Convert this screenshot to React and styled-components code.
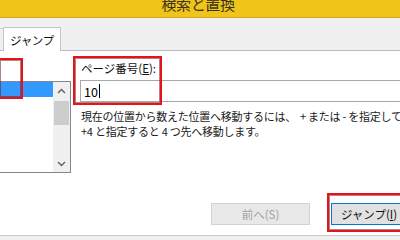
import React from "react";
import styled, { createGlobalStyle } from "styled-components";

const Global = createGlobalStyle`
  html, body { margin: 0; padding: 0; }
  body {
    width: 400px; height: 240px; overflow: hidden;
    background: #f0f0f0;
    font-family: "Noto Sans CJK JP", "Noto Sans", sans-serif;
    color: #1a1a1a;
  }
`;

const Page = styled.div`
  position: relative;
  width: 400px;
  height: 240px;
  overflow: hidden;
  display: flex;
  flex-direction: column;
`;

const TitleBar = styled.div`
  height: 17px;
  background: #f0c419;
  border-bottom: 1px solid #d5a90f;
  display: flex;
  justify-content: center;
  overflow: hidden;
  flex-shrink: 0;
`;

const Title = styled.span`
  font-size: 15px;
  line-height: 15px;
  margin-top: -4px;
  margin-left: -4px;
  color: #3a3220;
  letter-spacing: -0.4px;
`;

const TabStrip = styled.div`
  height: 32px;
  display: flex;
  align-items: flex-end;
  border-bottom: 1px solid #bcbcbc;
  flex-shrink: 0;
`;

const PrevTab = styled.div`
  width: 3px;
  height: 21px;
  border-top: 1px solid #d0d0d0;
  background: #f0f0f0;
`;

const Tab = styled.div`
  width: 56px;
  height: 23px;
  margin-bottom: -1px;
  background: #ffffff;
  border: 1px solid #c4c4c4;
  border-bottom: none;
  display: flex;
  align-items: center;
  justify-content: center;
  font-size: 11.5px;
  letter-spacing: -0.3px;
  color: #111;
`;

const Content = styled.div`
  flex: 1;
  background: #ffffff;
  display: flex;
  flex-direction: column;
  border-bottom: 1px solid #c9c9c9;
`;

const TopRow = styled.div`
  display: flex;
  align-items: flex-start;
`;

const ListBox = styled.div`
  margin-top: 30px;
  margin-left: -1px;
  width: 70px;
  height: 90px;
  border: 1px solid #828790;
  display: flex;
  flex-shrink: 0;
`;

const Items = styled.div`
  flex: 1;
`;

const Item = styled.div`
  height: 15px;
  background: ${(p) => (p.$selected ? "#3399ff" : "transparent")};
`;

const ScrollBar = styled.div`
  width: 17px;
  background: #f0f0f0;
  display: flex;
  flex-direction: column;
`;

const ScrollBtn = styled.div`
  height: 17px;
  display: flex;
  align-items: center;
  justify-content: center;
  flex-shrink: 0;
`;

const Track = styled.div`
  flex: 1;
  padding: 2px 1px 0 1px;
`;

const Thumb = styled.div`
  height: 24px;
  background: #cdcdcd;
`;

const RightCol = styled.div`
  flex: 1;
  margin-left: 9px;
  padding-top: 10px;
  min-width: 0;
`;

const Label = styled.div`
  font-size: 11.5px;
  line-height: 14px;
  padding-left: 1px;
  color: #111;
  u { text-decoration: underline; text-underline-offset: 1px; }
`;

const Input = styled.div`
  margin-top: 5px;
  height: 20px;
  border: 1px solid #a8a8a8;
  border-right: none;
  margin-right: -10px;
  display: flex;
  align-items: center;
  padding-left: 3px;
  font-size: 12.5px;
  color: #000;
`;

const Caret = styled.span`
  display: inline-block;
  width: 1px;
  height: 14px;
  background: #000;
  margin-left: 1px;
`;

const Desc = styled.div`
  margin-top: 7px;
  padding-left: 1px;
  font-size: 11px;
  line-height: 15px;
  letter-spacing: -0.25px;
  white-space: nowrap;
  color: #1a1a1a;
`;

const Wide = styled.span`
  margin-left: 4px;
`;

const ButtonRow = styled.div`
  margin-top: auto;
  padding: 0 0 10px 211px;
  display: flex;
  gap: 21px;
`;

const Button = styled.div`
  flex-shrink: 0;
  width: ${(p) => (p.$primary ? "76px" : "99px")};
  height: 22px;
  box-sizing: border-box;
  display: flex;
  align-items: center;
  justify-content: center;
  font-size: 11.5px;
  white-space: nowrap;
  background: ${(p) => (p.$disabled ? "#e8e8e8" : "#e1e1e1")};
  border: 1px solid ${(p) => (p.$disabled ? "#d2d2d2" : "#0078d7")};
  color: ${(p) => (p.$disabled ? "#a3a3a3" : "#111")};
  u { text-decoration: underline; text-underline-offset: 1px; }
`;

const Footer = styled.div`
  height: 4px;
  background: #f0f0f0;
  flex-shrink: 0;
`;

const Mark = styled.div`
  position: absolute;
  left: ${(p) => p.$x}px;
  top: ${(p) => p.$y}px;
  width: ${(p) => p.$w}px;
  height: ${(p) => p.$h}px;
  box-sizing: border-box;
  border: 2px solid #e3121b;
  box-shadow: inset 0 0 0 1px rgba(120, 30, 30, 0.55);
  pointer-events: none;
`;

const Chevron = ({ up }) => (
  <svg width="9" height="6" viewBox="0 0 9 6">
    <path
      d={up ? "M1 5 L4.5 1.5 L8 5" : "M1 1 L4.5 4.5 L8 1"}
      fill="none"
      stroke="#606060"
      strokeWidth="1.4"
    />
  </svg>
);

export default function App() {
  return (
    <Page>
      <Global />
      <TitleBar>
        <Title>検索と置換</Title>
      </TitleBar>
      <TabStrip>
        <PrevTab />
        <Tab>ジャンプ</Tab>
      </TabStrip>
      <Content>
        <TopRow>
          <ListBox>
            <Items>
              <Item $selected />
            </Items>
            <ScrollBar>
              <ScrollBtn>
                <Chevron up />
              </ScrollBtn>
              <Track>
                <Thumb />
              </Track>
              <ScrollBtn>
                <Chevron />
              </ScrollBtn>
            </ScrollBar>
          </ListBox>
          <RightCol>
            <Label>
              ページ番号(<u>E</u>):
            </Label>
            <Input>
              10
              <Caret />
            </Input>
            <Desc>
              現在の位置から数えた位置へ移動するには、<Wide>+</Wide> または - を指定してください。
              <br />
              +4 と指定すると 4 つ先へ移動します。
            </Desc>
          </RightCol>
        </TopRow>
        <ButtonRow>
          <Button $disabled>前へ(S)</Button>
          <Button $primary>
            ジャンプ(<u>I</u>)
          </Button>
        </ButtonRow>
      </Content>
      <Footer />
      <Mark $x={-2} $y={58} $w={25} $h={41} />
      <Mark $x={73} $y={56} $w={89} $h={49} />
      <Mark $x={327} $y={193} $w={100} $h={39} />
    </Page>
  );
}
